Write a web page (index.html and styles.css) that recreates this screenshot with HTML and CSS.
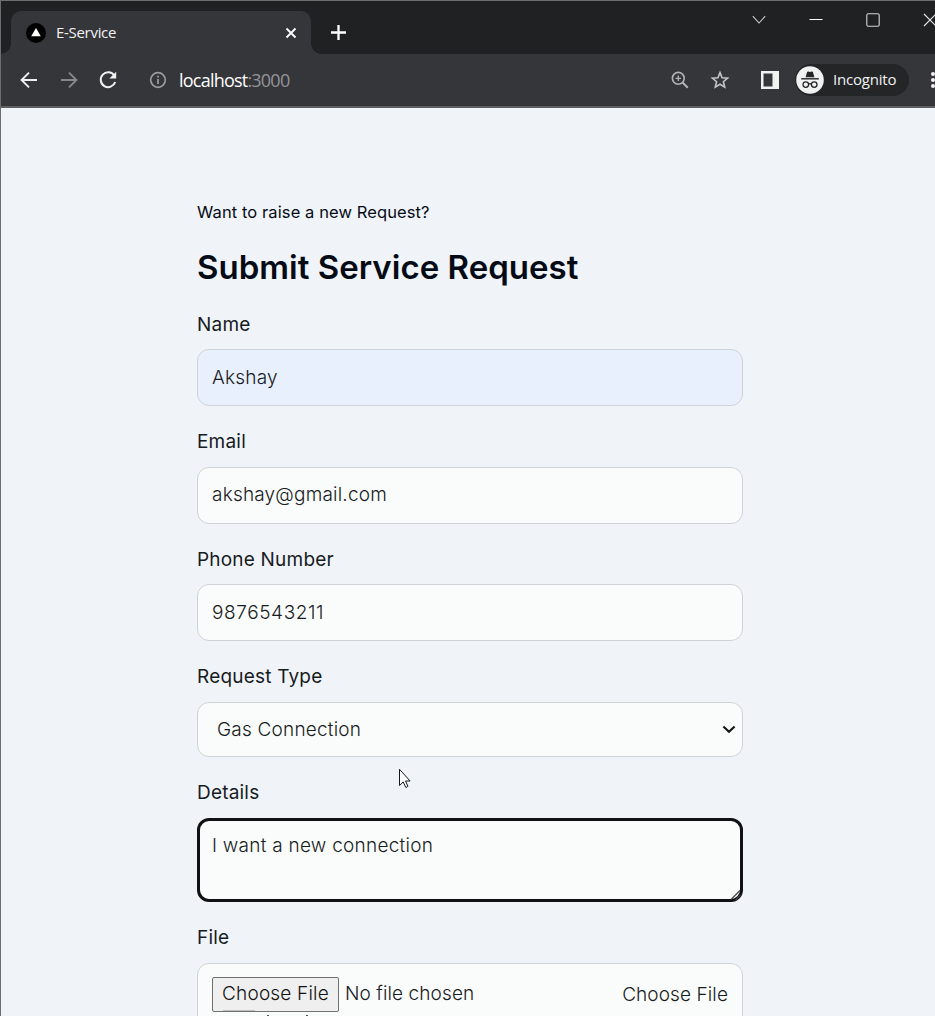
FILE: index.html
```html
<!DOCTYPE html>
<html lang="en">
<head>
<meta charset="utf-8">
<title>E-Service</title>
<link rel="stylesheet" href="styles.css">
</head>
<body>
<div class="window">
  <header class="chrome">
    <div class="tabstrip">
      <div class="tab">
        <svg class="favicon" width="20" height="20" viewBox="0 0 20 20"><circle cx="10" cy="10" r="10" fill="#000"/><path d="M10 5l4.8 8.2H5.2z" fill="#fff"/></svg>
        <span class="tab-title">E-Service</span>
        <svg class="tab-close" width="12" height="12" viewBox="0 0 12 12"><path d="M1.5 1.5l9 9M10.5 1.5l-9 9" stroke="#fff" stroke-width="1.8"/></svg>
      </div>
      <svg class="new-tab" width="16" height="16" viewBox="0 0 16 16"><path d="M8.5 1v15M1 8.5h15" stroke="#fff" stroke-width="2.3"/></svg>
      <div class="window-controls">
        <svg width="14" height="10" viewBox="0 0 14 10"><path d="M.8 1.2L7 8l6.2-6.8" fill="none" stroke="#d0d0d1" stroke-width="1.1"/></svg>
        <svg width="14" height="10" viewBox="0 0 14 10"><path d="M.5 4.5h13" stroke="#fff" stroke-width="1"/></svg>
        <svg width="14" height="14" viewBox="0 0 14 14"><rect x=".8" y=".8" width="12.4" height="12.4" rx="1.5" fill="none" stroke="#d6d6d6" stroke-width="1.1"/></svg>
        <svg width="14" height="14" viewBox="0 0 14 14"><path d="M1 1l12 12M13 1L1 13" stroke="#e6e6e6" stroke-width="1.1"/></svg>
      </div>
    </div>
    <div class="toolbar">
      <svg class="back" width="18" height="18" viewBox="0 0 18 18"><path d="M17 9H2M9 1.6L1.6 9 9 16.4" fill="none" stroke="#f1f1f2" stroke-width="1.9"/></svg>
      <svg class="forward" width="18" height="18" viewBox="0 0 18 18"><path d="M1 9h15M9 1.6L16.4 9 9 16.4" fill="none" stroke="#87888a" stroke-width="1.9"/></svg>
      <svg class="reload" width="20" height="20" viewBox="0 0 20 20"><path d="M16.3 5.6A7.4 7.4 0 1 0 17.2 12" fill="none" stroke="#f1f1f2" stroke-width="2"/><path d="M18.2 1.8v6.8h-6.8z" fill="#f1f1f2"/></svg>
      <svg class="info" width="18" height="18" viewBox="0 0 18 18"><circle cx="9" cy="9" r="7.3" fill="none" stroke="#9a9b9d" stroke-width="1.7"/><path d="M9 8v5M9 4.8v1.8" stroke="#9a9b9d" stroke-width="1.8"/></svg>
      <span class="url">localhost<span class="port">:3000</span></span>
      <div class="actions">
        <svg width="18" height="18" viewBox="0 0 18 18"><circle cx="7.3" cy="7.3" r="5.9" fill="none" stroke="#b3b4b6" stroke-width="1.6"/><path d="M7.3 4.6v5.4M4.6 7.3H10" stroke="#b3b4b6" stroke-width="1.3"/><path d="M11.5 11.5l5.3 5.3" stroke="#b3b4b6" stroke-width="2"/></svg>
        <svg class="star" width="20" height="20" viewBox="0 0 20 20"><path d="M10 2.6l2.1 5.1 5.5.45-4.2 3.6 1.3 5.4L10 14.3l-4.7 2.85 1.3-5.4-4.2-3.6 5.5-.45z" fill="none" stroke="#c4c5c6" stroke-width="1.6"/></svg>
        <svg class="panel" width="18" height="18" viewBox="0 0 18 18"><path fill-rule="evenodd" d="M0 0h18v18H0zM2.5 2.5v13h9v-13z" fill="#f1f1f2"/></svg>
        <div class="profile">
          <svg width="28" height="28" viewBox="0 0 28 28"><circle cx="14" cy="14" r="13.8" fill="#f1f1f2"/><path d="M9.6 11.3l1.5-5.2q.4-.9 1.3-.5l1.6.5 1.6-.5q.9-.4 1.3.5l1.5 5.2z" fill="#242527"/><path d="M5.2 12.8h17.6" stroke="#242527" stroke-width="1.4"/><g fill="none" stroke="#242527" stroke-width="1.3"><circle cx="9.8" cy="18.6" r="2.8"/><circle cx="18.2" cy="18.6" r="2.8"/><path d="M12.6 18.2q1.4-1 2.8 0"/></g></svg>
          <span class="profile-name">Incognito</span>
        </div>
        <svg class="menu" width="6" height="18" viewBox="0 0 6 18"><g fill="#f1f1f2"><circle cx="3" cy="3" r="2"/><circle cx="3" cy="9" r="2"/><circle cx="3" cy="15" r="2"/></g></svg>
      </div>
    </div>
  </header>
  <main class="page">
    <form class="form">
      <p class="intro">Want to raise a new Request?</p>
      <h1 class="title">Submit Service Request</h1>
      <div class="field"><label for="name">Name</label><input class="control autofilled" id="name" value="Akshay"></div>
      <div class="field"><label for="email">Email</label><input class="control" id="email" value="akshay@gmail.com"></div>
      <div class="field"><label for="phone">Phone Number</label><input class="control phone" id="phone" value="9876543211"></div>
      <div class="field"><label for="type">Request Type</label>
        <div class="stack">
          <select class="control select" id="type"><option>Gas Connection</option></select>
          <svg class="caret" width="14" height="9" viewBox="0 0 14 9"><path d="M1.4 1.5L7 6.8l5.6-5.3" fill="none" stroke="#151515" stroke-width="2.1"/></svg>
        </div>
      </div>
      <div class="field"><label for="details">Details</label>
        <div class="stack">
          <textarea class="control details" id="details">I want a new connection</textarea>
          <svg class="grip" width="12" height="12" viewBox="0 0 12 12"><path d="M1 10.5l9-9M5.5 11l5-5" stroke="#444" stroke-width="1.2"/></svg>
        </div>
      </div>
      <div class="field"><label>File</label>
        <div class="control file">
          <button type="button" class="choose">Choose File</button>
          <span class="status">No file chosen</span>
          <span class="prompt">Choose File</span>
        </div>
      </div>
    </form>
  </main>
  <svg class="residue" width="90" height="8" viewBox="0 0 90 8"><path d="M1 2.5h32" stroke="#bdbdbd"/><path d="M45 7.5h2M84 7.5h2" stroke="#555"/></svg>
  <svg class="cursor" width="14" height="21" viewBox="0 0 14 21"><path d="M1.5 1.3v16.2l3.7-3.6 2.5 5.3q1.6.5 2.2-1L7.5 13h4.6z" fill="#fff" stroke="#15171c" stroke-width="1"/></svg>
</div>
</body>
</html>
```
FILE: styles.css
```css
* { box-sizing: border-box; }
html, body { margin: 0; height: 100%; overflow: hidden; }
svg { display: block; flex: none; }

.window {
  position: relative;
  display: flex;
  flex-direction: column;
  height: 1016px;
  border-top: 1px solid #6d6e6f;
  border-left: 1px solid #6d6e6f;
  background: #f0f4f9;
  font-family: Inter, sans-serif;
  overflow: hidden;
}

/* Browser frame */
.chrome { flex: none; font-family: "Open Sans", "Noto Sans", sans-serif; color: #f1f1f2; }
.tabstrip { display: flex; height: 53px; background: #202123; padding: 10px 0 0 10px; }
.tab {
  position: relative;
  display: flex;
  align-items: center;
  width: 300px;
  height: 43px;
  padding: 0 14px 0 15px;
  border-radius: 10px 10px 0 0;
  background: #35363a;
}
.tab::before, .tab::after {
  content: "";
  position: absolute;
  bottom: 0;
  width: 10px;
  height: 10px;
}
.tab::before { left: -10px; background: radial-gradient(circle at 0 0, #202123 9.5px, #35363a 10px); }
.tab::after { right: -10px; background: radial-gradient(circle at 100% 0, #202123 9.5px, #35363a 10px); }
.tab-title { margin-left: 10px; padding-bottom: 2px; font-size: 15px; letter-spacing: -0.3px; }
.tab-close { margin-left: auto; }
.new-tab { margin: 13px 0 0 19px; }
.window-controls {
  display: flex;
  align-items: center;
  gap: 43px;
  height: 20px;
  margin: -1px -2px 0 auto;
}
.toolbar {
  display: flex;
  align-items: center;
  height: 54px;
  padding-left: 19px;
  background: #35363a;
  border-bottom: 2px solid #5d5e61;
}
.forward { margin-left: 22px; }
.reload { margin-left: 20px; }
.info { margin-left: 31px; }
.url { margin-left: 12px; font-size: 18px; letter-spacing: -0.78px; color: #fff; }
.port { color: #939496; }
.actions { display: flex; align-items: center; margin: 0 -1px 0 auto; }
.star { margin-left: 21px; }
.panel { margin-left: 31px; }
.profile {
  display: flex;
  align-items: center;
  gap: 9px;
  width: 114px;
  height: 32px;
  margin-left: 16px;
  padding-left: 1px;
  border-radius: 16px;
  background: #242527;
  font-size: 15px;
  letter-spacing: -0.2px;
}
.profile-name { padding-bottom: 2px; }
.menu { margin-left: 21px; }

/* Request form */
.page { flex: 1; color: #050b16; }
.form { width: 546px; margin-left: 196px; padding-top: 90px; }
.intro { margin: 0; font-size: 16.5px; line-height: 28px; letter-spacing: 0.1px; }
.title { margin: 19px 0 20.5px; font-size: 33px; font-weight: 600; line-height: 44px; letter-spacing: 0.02px; }
.field { margin-bottom: 21px; color: #171b22; }
.field label {
  display: block;
  margin-bottom: 9.5px;
  font-size: 19px;
  line-height: 30px;
  letter-spacing: 0.2px;
}
.control {
  display: block;
  width: 100%;
  height: 57px;
  margin: 0;
  padding: 0 14px 1px;
  border: 1px solid #cfd3d8;
  border-radius: 12px;
  outline: none;
  background: #fafcfb;
  color: #171b22;
  font: 300 19px/28px Inter, sans-serif;
  letter-spacing: 0.2px;
}
.autofilled { background: #e8f0fe; }
.phone { letter-spacing: 0.6px; }
.stack { display: grid; }
.stack > * { grid-area: 1 / 1; }
.select { appearance: none; height: 55px; padding: 1px 0 0 19px; }
.caret { place-self: center end; margin-right: 7px; }
.details {
  height: 84px;
  margin-top: 0.5px;
  padding: 11px 12px;
  border: 3px solid #101112;
  resize: none;
  letter-spacing: 0.25px;
}
.grip { place-self: end; margin: 0 1px 1px 0; }
.file {
  display: flex;
  align-items: flex-start;
  height: 84px;
  margin-top: 10px;
  padding-top: 13px;
}
.choose {
  flex: none;
  width: 127px;
  height: 35px;
  padding: 0;
  border: 1px solid #707070;
  border-radius: 2px;
  background: #efefef;
  color: #111;
  font: inherit;
  letter-spacing: inherit;
  white-space: nowrap;
}
.status { margin: 3px 0 0 6px; letter-spacing: 0.1px; }
.prompt { margin: 4px 0 0 auto; letter-spacing: 0.1px; }

.residue { position: absolute; left: 221px; bottom: 0; }
.cursor { position: absolute; left: 397px; top: 767px; }
```
